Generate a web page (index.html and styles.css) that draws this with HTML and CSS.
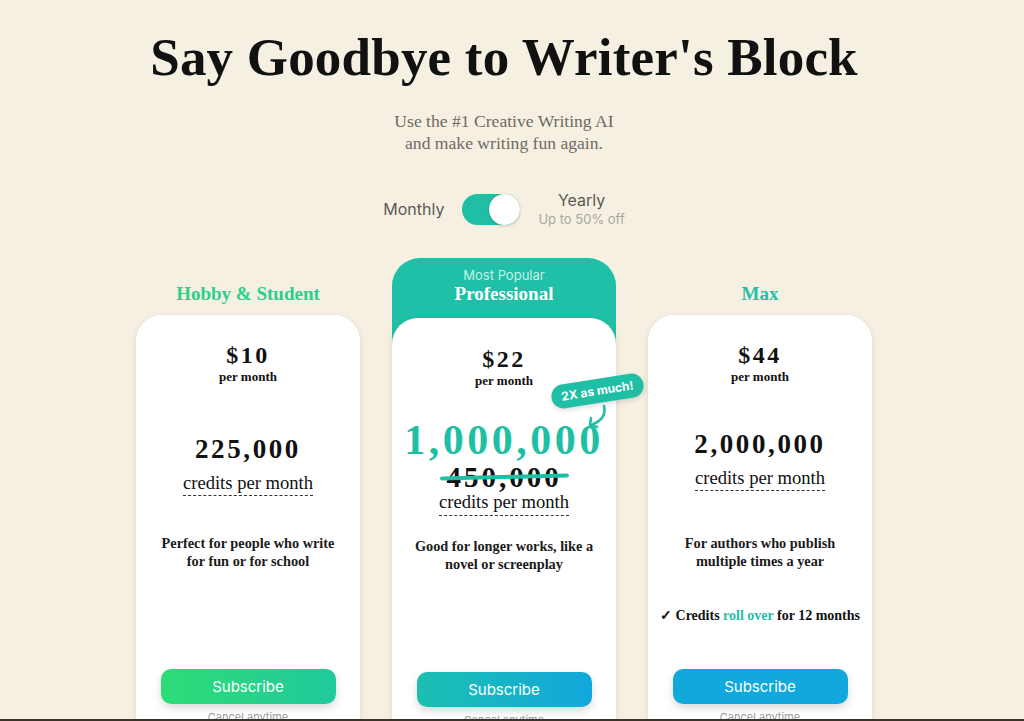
FILE: index.html
```html
<!DOCTYPE html>
<html lang="en">
<head>
  <meta charset="UTF-8" />
  <meta name="viewport" content="width=device-width, initial-scale=1.0"/>
  <title>Pricing</title>
  <link rel="stylesheet" href="styles.css">
</head>
<body>
  <div class="page">
    <h1 class="title">Say Goodbye to Writer's Block</h1>
    <p class="subtitle">Use the #1 Creative Writing AI<br />and make writing fun again.</p>

    <div class="billing">
      <span class="billing-label">Monthly</span>
      <button class="switch" aria-label="Yearly billing"><span class="knob"></span></button>
      <div class="billing-yearly">
        <span class="billing-label">Yearly</span>
        <span class="billing-note">Up to 50% off</span>
      </div>
    </div>

    <div class="plans">
      <div class="plan">
        <div class="plan-head">
          <h2 class="plan-name green">Hobby &amp; Student</h2>
        </div>
        <div class="card">
          <div class="price">
            <div class="amount">$10</div>
            <div class="period">per month</div>
          </div>
          <div class="credits credits-low">
            <div class="credit-count">225,000</div>
            <div class="credit-label">credits per month</div>
          </div>
          <div class="details">
            <p class="desc">Perfect for people who write for fun or for school</p>
          </div>
          <button class="subscribe btn-green">Subscribe</button>
          <div class="cancel">Cancel anytime</div>
        </div>
      </div>

      <div class="plan popular">
        <div class="plan-head">
          <span class="popular-tag">Most Popular</span>
          <h2 class="plan-name">Professional</h2>
        </div>
        <div class="card">
          <div class="badge">2X as much!</div>
          <svg class="badge-arrow" width="30" height="30" viewBox="0 0 30 30" fill="none" stroke="#22bfa6" stroke-width="2.6" stroke-linecap="round" stroke-linejoin="round">
            <path d="M22 3 C24 11 20 18 9 22" />
            <path d="M9 15 L8 22 L15 24" />
          </svg>
          <div class="price">
            <div class="amount">$22</div>
            <div class="period">per month</div>
          </div>
          <div class="credits">
            <div class="credit-count big">1,000,000</div>
            <div class="credit-old"><span class="strike">450,000</span></div>
            <div class="credit-label">credits per month</div>
          </div>
          <div class="details">
            <p class="desc">Good for longer works, like a novel or screenplay</p>
          </div>
          <button class="subscribe btn-teal">Subscribe</button>
          <div class="cancel">Cancel anytime</div>
        </div>
      </div>

      <div class="plan">
        <div class="plan-head">
          <h2 class="plan-name teal">Max</h2>
        </div>
        <div class="card">
          <div class="price">
            <div class="amount">$44</div>
            <div class="period">per month</div>
          </div>
          <div class="credits">
            <div class="credit-count">2,000,000</div>
            <div class="credit-label">credits per month</div>
          </div>
          <div class="details">
            <p class="desc">For authors who publish multiple times a year</p>
            <p class="perk">&#10003; Credits <span class="hl">roll over</span> for 12 months</p>
          </div>
          <button class="subscribe btn-blue">Subscribe</button>
          <div class="cancel">Cancel anytime</div>
        </div>
      </div>
    </div>
  </div>
  <div class="frame-edge"></div>
</body>
</html>
```

FILE: styles.css
```css
body {
  margin: 0;
  background: #f5f0e2;
  font-family: "Liberation Serif", serif;
  color: #111;
  overflow: hidden;
}
.page {
  width: 1008px;
  text-align: center;
  padding-top: 25px;
}
.title {
  margin: 0;
  font-size: 53px;
  line-height: 64px;
  font-weight: bold;
  letter-spacing: 0.2px;
}
.subtitle {
  margin: 21px 0 0;
  font-size: 17.6px;
  line-height: 22px;
  color: #6f6a63;
}

/* billing switch */
.billing {
  display: flex;
  justify-content: center;
  align-items: center;
  gap: 18px;
  margin-top: 36px;
  font-family: Inter, "Noto Sans", sans-serif;
}
.billing-label {
  font-size: 16px;
  color: #5c5a57;
}
.switch {
  width: 58px;
  height: 31px;
  border: none;
  border-radius: 16px;
  background: #1fbfa5;
  padding: 0;
  display: flex;
  justify-content: flex-end;
  cursor: pointer;
}
.knob {
  width: 31px;
  height: 31px;
  border-radius: 50%;
  background: #fff;
  box-shadow: 0 1px 3px rgba(0, 0, 0, 0.2);
}
.billing-yearly {
  display: flex;
  flex-direction: column;
  align-items: center;
}
.billing-yearly .billing-label {
  line-height: 20px;
}
.billing-note {
  font-size: 13px;
  line-height: 18px;
  color: #a9a6a0;
}

/* plans */
.plans {
  display: flex;
  justify-content: center;
  align-items: flex-start;
  gap: 32px;
  margin-top: 30px;
}
.plan {
  width: 224px;
}
.plan-head {
  height: 57px;
  display: flex;
  flex-direction: column;
  justify-content: flex-end;
  padding-bottom: 10px;
  box-sizing: border-box;
}
.plan-name {
  margin: 0;
  font-size: 19px;
  line-height: 22px;
  font-weight: bold;
}
.green { color: #2dcf8c; }
.teal { color: #22c0a8; }

.popular .plan-head {
  height: 88px;
  margin-bottom: -28px;
  padding: 9px 0 0;
  justify-content: flex-start;
  background: #1fbfa8;
  border-radius: 28px 28px 0 0;
}
.popular .plan-name {
  color: #fff;
}
.popular-tag {
  font-family: Inter, "Noto Sans", sans-serif;
  font-size: 13px;
  line-height: 16px;
  color: #c8f1e7;
}

.card {
  position: relative;
  background: #fff;
  border-radius: 26px;
  height: 440px;
  padding-top: 26px;
  box-sizing: border-box;
  box-shadow: 0 2px 6px rgba(90, 80, 50, 0.15);
  display: flex;
  flex-direction: column;
  align-items: center;
}
.popular .card {
  padding-top: 27px;
}
.amount {
  font-size: 24px;
  line-height: 28px;
  font-weight: bold;
  letter-spacing: 2.5px;
}
.period {
  font-size: 13px;
  line-height: 16px;
  font-weight: bold;
}
.credits {
  height: 149px;
  display: flex;
  flex-direction: column;
  justify-content: center;
  align-items: center;
  box-sizing: border-box;
}
.credits-low {
  padding-top: 9px;
}
.popular .credits {
  height: 148px;
  padding-top: 7px;
}
.credit-count {
  font-size: 27px;
  line-height: 32px;
  font-weight: bold;
  letter-spacing: 2.6px;
  margin-bottom: 7px;
}
.credit-count.big {
  font-size: 42px;
  line-height: 46px;
  letter-spacing: 3.5px;
  color: #1fbfa6;
  margin-bottom: 0;
}
.credit-old {
  font-size: 29px;
  line-height: 28px;
  font-weight: bold;
  letter-spacing: 3px;
}
.strike {
  position: relative;
}
.strike::after {
  content: "";
  position: absolute;
  left: -6px;
  right: -8px;
  top: 14px;
  height: 4px;
  border-radius: 2px;
  background: #1fbfa6;
  transform: rotate(-1.4deg);
}
.credit-label {
  font-size: 18.6px;
  line-height: 22px;
  padding: 0 0 1px;
  border-bottom: 1px dashed #333;
}
.popular .credit-label {
  padding-bottom: 2px;
}
.details {
  height: 135px;
  padding: 0 20px;
}
.desc {
  margin: 0;
  font-size: 14.3px;
  line-height: 18px;
  font-weight: bold;
  color: #1b1b1b;
}
.perk {
  margin: 37px 0 0;
  font-size: 14px;
  line-height: 18px;
  font-weight: bold;
  white-space: nowrap;
}
.hl {
  color: #22c0a8;
}
.subscribe {
  width: 175px;
  height: 35px;
  border: none;
  border-radius: 10px;
  color: #fff;
  font-family: Inter, "Noto Sans", sans-serif;
  font-size: 15px;
  cursor: pointer;
  box-shadow: 0 4px 8px rgba(0, 0, 0, 0.15);
}
.btn-green { background: linear-gradient(90deg, #2ddc76, #22c99c); }
.btn-teal { background: linear-gradient(90deg, #1cbfb0, #12a7dd); }
.btn-blue { background: #12a8db; }
.cancel {
  margin-top: 6px;
  font-family: Inter, "Noto Sans", sans-serif;
  font-size: 11px;
  color: #9a9a9a;
}

/* callout on the professional card */
.badge {
  position: absolute;
  left: 159px;
  top: 61px;
  padding: 0 10px;
  height: 24px;
  line-height: 24px;
  border-radius: 12px;
  background: #1fbfa6;
  color: #fff;
  font-family: Inter, "Noto Sans", sans-serif;
  font-size: 12px;
  font-weight: bold;
  white-space: nowrap;
  transform: rotate(-9deg);
  box-shadow: 0 2px 5px rgba(0, 0, 0, 0.15);
}
.badge-arrow {
  position: absolute;
  left: 190px;
  top: 85px;
}

.frame-edge {
  position: fixed;
  left: 0;
  right: 0;
  bottom: 0;
  height: 2px;
  background: #3a3129;
}
```
